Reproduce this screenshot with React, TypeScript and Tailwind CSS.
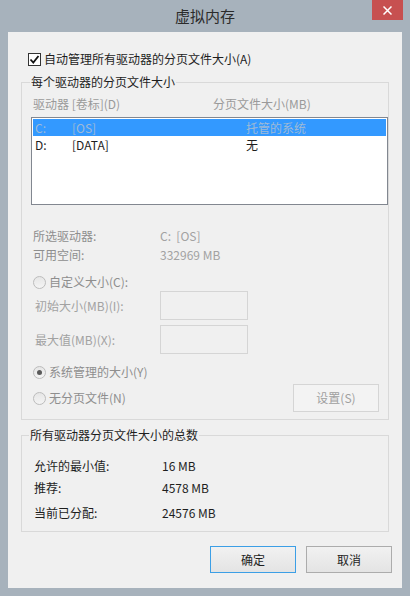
import React from "react";

const font = { fontFamily: '"Noto Sans CJK SC", "Noto Sans", sans-serif' };

function Radio({ checked = false }: { checked?: boolean }) {
  return (
    <span className="flex h-[13px] w-[13px] shrink-0 items-center justify-center rounded-full border border-[#bcbcbc] bg-gradient-to-b from-[#e6e6e6] to-[#f4f4f4]">
      {checked && <span className="h-[5px] w-[5px] rounded-full bg-[#5a5a5a]" />}
    </span>
  );
}

function Btn({ label, focused = false, disabled = false }: { label: string; focused?: boolean; disabled?: boolean }) {
  return (
    <div
      className={
        "flex h-[27px] w-[86px] items-center justify-center border text-[12px] leading-[16px] " +
        (disabled
          ? "border-[#d5d5d5] bg-[#f4f4f4] text-[#a0a0a0]"
          : focused
          ? "border-[#3c9fe6] bg-gradient-to-b from-[#f1f1f1] to-[#e4e4e4] text-[#1e1e1e]"
          : "border-[#acacac] bg-gradient-to-b from-[#f1f1f1] to-[#e4e4e4] text-[#1e1e1e]")
      }
    >
      {label}
    </div>
  );
}

export default function App() {
  return (
    <div className="flex h-[596px] w-[410px] flex-col bg-[#a7b2bc]" style={font}>
      {/* title bar */}
      <div className="relative flex h-[32px] shrink-0 items-center justify-center">
        <span className="text-[15px] leading-[20px] text-[#2b2b2b]">虚拟内存</span>
        <div className="absolute right-[7px] top-0 flex h-[20px] w-[31px] items-center justify-center bg-[#c75050]">
          <svg width="9" height="9" viewBox="0 0 9 9">
            <path d="M0.5 0.5 L8.5 8.5 M8.5 0.5 L0.5 8.5" stroke="#fff" strokeWidth="1.5" />
          </svg>
        </div>
      </div>

      {/* client area */}
      <div className="mx-[8px] mb-[8px] flex flex-1 flex-col bg-[#f0f0f0] px-[10px] pt-[19px] text-[12px] leading-[16px] text-[#1e1e1e]">
        <div className="ml-[10px] flex items-center gap-[3px]">
          <span className="flex h-[13px] w-[13px] items-center justify-center border border-[#333] bg-white">
            <svg width="11" height="11" viewBox="0 0 11 11">
              <path d="M1.5 5.5 L4.3 8.5 L9.5 2" fill="none" stroke="#111" strokeWidth="1.8" />
            </svg>
          </span>
          <span>自动管理所有驱动器的分页文件大小(A)</span>
        </div>

        {/* group 1 */}
        <fieldset className="mx-[3px] mt-[7px] border border-[#d9d9d9] pb-[7px]">
          <legend className="ml-[8px] px-[1px]">每个驱动器的分页文件大小</legend>
          <div className="mt-[6px] flex pl-[11px] text-[#9a9a9a]">
            <span className="w-[180px]">驱动器 [卷标](D)</span>
            <span>分页文件大小(MB)</span>
          </div>
          <div className="ml-[9px] mt-[5px] h-[88px] border border-[#828790] bg-white px-[1px] pt-[1px]">
            <div className="flex h-[17px] items-center bg-[#3399ff] pl-[2px] text-[#9fb9d6]">
              <span className="w-[37px]">C:</span>
              <span className="w-[174px]">[OS]</span>
              <span>托管的系统</span>
            </div>
            <div className="flex h-[17px] items-center pl-[2px]">
              <span className="w-[37px]">D:</span>
              <span className="w-[174px]">[DATA]</span>
              <span>无</span>
            </div>
          </div>

          <div className="mt-[23px] flex pl-[11px] text-[#8e8e8e]">
            <span className="w-[127px]">所选驱动器:</span>
            <span className="text-[#a2a2a2]">C:&nbsp; [OS]</span>
          </div>
          <div className="mt-[3px] flex pl-[11px] text-[#8e8e8e]">
            <span className="w-[127px]">可用空间:</span>
            <span className="text-[#a2a2a2]">332969 MB</span>
          </div>

          <div className="mt-[11px] flex items-center gap-[3px] pl-[11px] text-[#8e8e8e]">
            <Radio />
            <span>自定义大小(C):</span>
          </div>
          <div className="mt-[1px] flex items-center pl-[13px] text-[#a2a2a2]">
            <span className="w-[125px]">初始大小(MB)(I):</span>
            <div className="h-[29px] w-[88px] border border-[#d5d5d5] bg-[#f0f0f0]" />
          </div>
          <div className="mt-[5px] flex items-center pl-[13px] text-[#a2a2a2]">
            <span className="w-[125px]">最大值(MB)(X):</span>
            <div className="h-[29px] w-[88px] border border-[#d5d5d5] bg-[#f0f0f0]" />
          </div>

          <div className="mt-[10px] flex items-center gap-[3px] pl-[11px] text-[#8e8e8e]">
            <Radio checked />
            <span>系统管理的大小(Y)</span>
          </div>
          <div className="mt-[4px] flex h-[28px] items-center justify-between pl-[11px] pr-[9px] text-[#8e8e8e]">
            <div className="flex items-center gap-[3px]">
              <Radio />
              <span>无分页文件(N)</span>
            </div>
            <div className="flex h-[28px] w-[86px] items-center justify-center border border-[#d5d5d5] bg-[#f3f3f3] text-[#a0a0a0]">
              设置(S)
            </div>
          </div>
        </fieldset>

        {/* group 2 */}
        <fieldset className="mx-[3px] mt-[7px] border border-[#d9d9d9] pb-[10px]">
          <legend className="ml-[7px] px-[1px]">所有驱动器分页文件大小的总数</legend>
          <div className="mt-[15px] flex pl-[12px]">
            <span className="w-[128px]">允许的最小值:</span>
            <span>16 MB</span>
          </div>
          <div className="mt-[6px] flex pl-[12px]">
            <span className="w-[128px]">推荐:</span>
            <span>4578 MB</span>
          </div>
          <div className="mt-[9px] flex pl-[12px]">
            <span className="w-[128px]">当前已分配:</span>
            <span>24576 MB</span>
          </div>
        </fieldset>

        <div className="mt-[14px] flex justify-end gap-[10px]">
          <Btn label="确定" focused />
          <Btn label="取消" />
        </div>
      </div>
    </div>
  );
}
